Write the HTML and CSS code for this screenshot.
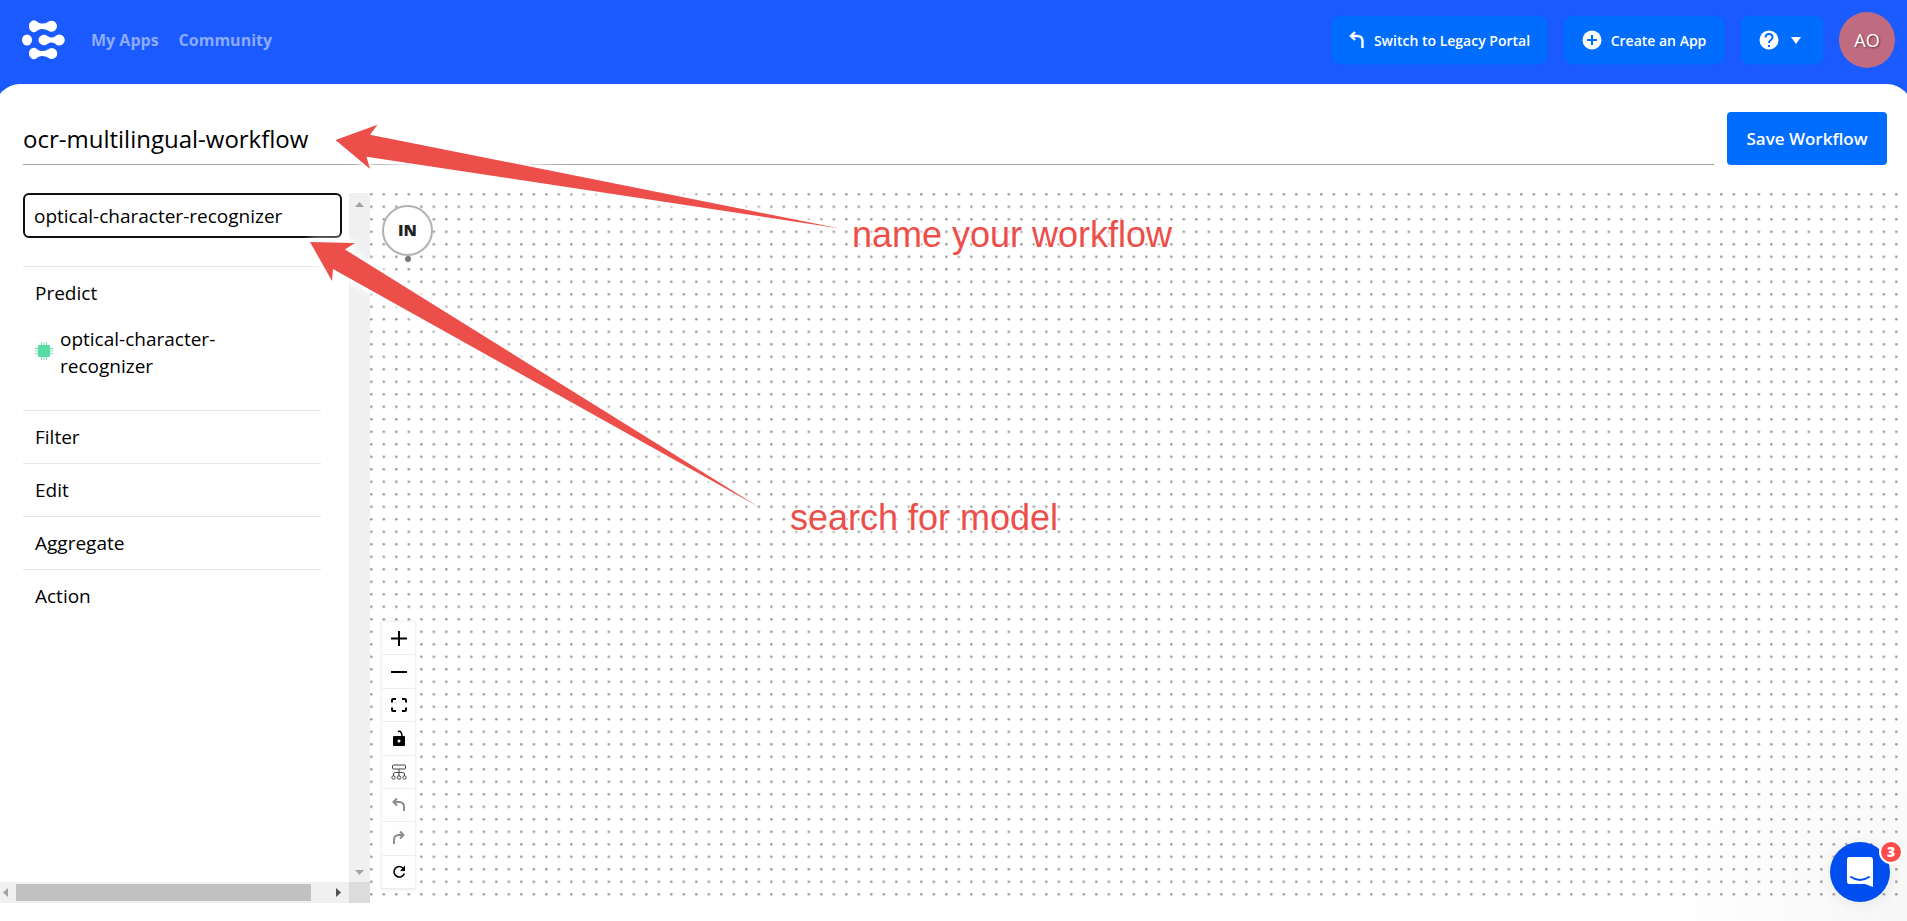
FILE: index.html
```html
<!DOCTYPE html>
<html lang="en">
<head>
<meta charset="utf-8">
<title>Workflow editor</title>
<link rel="stylesheet" href="styles.css">
</head>
<body>
<div class="page">
  <header class="topbar">
    <a class="logo" href="#" aria-label="Home">
      <svg width="44" height="40" viewBox="0 0 44 40" fill="#fff">
        <path d="M7 6.500a5 5.500 0 0 1 8.500-4.500c3 2 7 2 10.500 0a5.500 5.500 0 1 1 0 8.500c-3.500-2-7.500-2-10.500 0A5 5.500 0 0 1 7 6.500z"/>
        <ellipse cx="5" cy="20" rx="5" ry="5.500"/>
        <path d="M16.500 20a5.500 5.500 0 0 1 8.500-4.300c3 2.300 5.500 2.500 8.500.3a5.500 5.500 0 1 1 0 8c-3-2.200-5.500-2-8.500.3a5.500 5.500 0 0 1-8.500-4.300z"/>
        <path d="M7 33.500a5 5.500 0 0 1 8.500-4c3 2 7 2 10.500 0a5.500 5.500 0 1 1 0 8c-3.500-2-7.500-2-10.500 0A5 5.500 0 0 1 7 33.500z"/>
      </svg>
    </a>
    <nav class="nav">
      <a href="#">My Apps</a>
      <a href="#">Community</a>
    </nav>
    <div class="actions">
      <button class="action switch" type="button">
        <svg width="16" height="18" viewBox="0 0 16 18" fill="none" stroke="#fff" stroke-width="2.400"><path d="M6 1 2 5l4 4M2 5h6q5.500 0 5.500 5v7"/></svg>
        Switch to Legacy Portal
      </button>
      <button class="action create" type="button">
        <svg width="20" height="20" viewBox="0 0 20 20"><circle cx="10" cy="10" r="9.500" fill="#fff"/><path d="M10 5v10M5 10h10" stroke="#006dff" stroke-width="2"/></svg>
        Create an App
      </button>
      <button class="action help" type="button" aria-label="Help">
        <svg width="20" height="20" viewBox="0 0 20 20"><circle cx="10" cy="10" r="9.500" fill="#fff"/><path d="M6.500 7.500q0-3.500 3.500-3.500t3.500 3.300q0 1.700-1.700 2.700T10 13" fill="none" stroke="#006dff" stroke-width="2"/><path d="M9 15h2v2H9z" fill="#006dff"/></svg>
        <svg width="10" height="7" viewBox="0 0 10 7"><path d="M0 0h10L5 7z" fill="#fff"/></svg>
      </button>
      <button class="avatar" type="button">AO</button>
    </div>
  </header>

  <main class="sheet">
    <div class="titlebar">
      <input class="title" type="text" aria-label="Workflow name" value="ocr-multilingual-workflow">
      <button class="save" type="button">Save Workflow</button>
    </div>
    <div class="editor">
      <aside class="side">
        <div class="palette">
          <input class="search" type="text" aria-label="Search models" value="optical-character-recognizer">
          <section class="group">
            <h2>Predict</h2>
            <a class="model" href="#">
              <svg width="18" height="18" viewBox="0 0 18 18"><rect x="3" y="3" width="12" height="12" rx="1" fill="#57dca5"/><path d="M6.500 0v18M9 0v18M11.500 0v18M0 6.500h18M0 9h18M0 11.500h18" stroke="#57dca5" stroke-opacity=".8"/></svg>
              <span>optical-character-recognizer</span>
            </a>
          </section>
          <section class="group"><h2>Filter</h2></section>
          <section class="group"><h2>Edit</h2></section>
          <section class="group"><h2>Aggregate</h2></section>
          <section class="group"><h2>Action</h2></section>
        </div>
        <div class="vscroll">
          <svg width="9" height="5" viewBox="0 0 9 5"><path d="M0 5h9L4.500 0z" fill="#a3a3a3"/></svg>
          <svg width="9" height="5" viewBox="0 0 9 5"><path d="M0 0h9L4.500 5z" fill="#a3a3a3"/></svg>
        </div>
        <div class="hscroll">
          <svg width="5" height="9" viewBox="0 0 5 9"><path d="M5 0v9L0 4.500z" fill="#a3a3a3"/></svg>
          <span class="thumb"></span>
          <svg width="5" height="9" viewBox="0 0 5 9"><path d="M0 0v9l5-4.500z" fill="#505050"/></svg>
        </div>
        <div class="corner"></div>
      </aside>
      <div class="canvas">
        <svg class="dots" aria-hidden="true">
          <defs><pattern id="grid" width="12.500" height="12.500" patternUnits="userSpaceOnUse"><circle cx="1.300" cy="1.300" r="1.300" fill="#9c9ca0"/></pattern></defs>
          <rect width="100%" height="100%" fill="url(#grid)"/>
        </svg>
        <div class="node">IN</div>
        <div class="tools">
          <button type="button" aria-label="Zoom in"><svg width="16" height="16" viewBox="0 0 16 16"><path d="M8 1v15M0 8.500h16" stroke="#000" stroke-width="2"/></svg></button>
          <button type="button" aria-label="Zoom out"><svg width="16" height="16" viewBox="0 0 16 16"><path d="M0 8h16" stroke="#000" stroke-width="2"/></svg></button>
          <button type="button" aria-label="Fit view"><svg width="16" height="16" viewBox="0 0 16 16"><path d="M1 5.500V3q0-1 1-1h3M11 2h3q1 0 1 1v2.500M15 10.500V13q0 1-1 1h-3M5 14H2q-1 0-1-1v-2.500" fill="none" stroke="#000" stroke-width="2"/></svg></button>
          <button type="button" aria-label="Lock"><svg width="16" height="16" viewBox="0 0 16 16"><rect x="2" y="6" width="12" height="10" rx="1"/><circle cx="8" cy="11" r="1.500" fill="#fff"/><path d="M7 1.500q4-1 4 5" fill="none" stroke="#000" stroke-width="1.500"/></svg></button>
          <button type="button" aria-label="Auto layout"><svg width="16" height="16" viewBox="0 0 16 16" fill="none" stroke="#444"><rect x="1.500" y="1" width="13" height="4" rx="1"/><path d="M8 5v7M2.500 12V10q0-1.500 2-1.500h7q2 0 2 1.500v2"/><circle cx="2.500" cy="13.500" r="1.700"/><circle cx="8" cy="13.500" r="1.700"/><circle cx="13.500" cy="13.500" r="1.700"/></svg></button>
          <button type="button" aria-label="Undo"><svg width="16" height="16" viewBox="0 0 16 16" fill="none" stroke="#8c8c8c" stroke-width="2"><path d="M6 1.500 2.500 5 6 8.500M2.500 5H8q5 0 5 5v4"/></svg></button>
          <button type="button" aria-label="Redo"><svg width="16" height="16" viewBox="0 0 16 16" fill="none" stroke="#8c8c8c" stroke-width="2"><path d="m9 1.500 3.500 3.500L9 8.500M12.500 5H8Q3 5 3 10v4"/></svg></button>
          <button type="button" aria-label="Reset"><svg width="16" height="16" viewBox="0 0 16 16"><path d="M12.500 4.500A5.300 5.300 0 1 0 13.300 9.500" fill="none" stroke="#000" stroke-width="1.600"/><path d="M14 1.500V7H9z"/></svg></button>
        </div>
      </div>
    </div>
  </main>

  <svg class="arrows" aria-hidden="true" fill="#ec4e4a">
    <path d="M335.500 140 377.500 124.700 370 134.700 840 228.500 366.500 156.700 370 169z"/>
    <path d="M310 242 355 243 345 249.500 758 506.500 333 269 332 281z"/>
  </svg>
  <p class="note note-name">name your workflow</p>
  <p class="note note-search">search for model</p>

  <div class="haze"></div>
  <button class="chat" type="button" aria-label="Open chat">
    <svg width="28" height="32" viewBox="0 0 28 32"><path d="M3 1h21q3 0 3 3v27l-8-3H3q-2 0-2-3V4q0-3 2-3z" fill="#fff"/><path d="M5 21q9 6 18 0" fill="none" stroke="#004ef0" stroke-width="2" stroke-linecap="round"/></svg>
    <span class="badge">3</span>
  </button>
</div>
</body>
</html>
```
FILE: styles.css
```css
* { box-sizing: border-box; }

body {
  margin: 0;
  font-family: "Open Sans", "Noto Sans", sans-serif;
  font-size: 19px;
  line-height: 27px;
  color: #000;
  background: #fff;
}

button, input { font: inherit; color: inherit; margin: 0; }
button { border: 0; cursor: pointer; }
h2, p { margin: 0; font-weight: 400; font-size: inherit; }
a { color: inherit; text-decoration: none; }

.page {
  position: relative;
  display: flex;
  flex-direction: column;
  min-height: 100vh;
  overflow: hidden;
  background: #1a5aff;
}

.topbar {
  display: flex;
  align-items: center;
  height: 84px;
  padding: 0 12px 4px 22px;
}

.logo { display: flex; }
.nav {
  display: flex;
  gap: 20px;
  margin-left: 25px;
  font-size: 16px;
  font-weight: 700;
  color: #8cabff;
}

.actions {
  display: flex;
  align-items: center;
  gap: 17px;
  margin-left: auto;
}

.action {
  display: flex;
  align-items: center;
  justify-content: center;
  gap: 9px;
  height: 48px;
  padding: 0;
  border-radius: 8px;
  background: #006dff;
  box-shadow: 0 1px 3px rgba(0, 109, 255, .4);
  color: #fff;
  font-size: 14px;
  font-weight: 600;
  white-space: nowrap;
}
.switch { width: 215px; }
.create { width: 160px; }
.help { width: 82px; gap: 12px; padding-right: 4px; }

.avatar {
  width: 56px;
  height: 56px;
  margin-left: -1px;
  padding: 0;
  border-radius: 50%;
  background: #c16b80;
  color: #fff;
  font-size: 18px;
  text-shadow: 1px 1px 2px rgba(0, 0, 0, .5);
}

.sheet {
  flex: 1;
  display: flex;
  flex-direction: column;
  margin: 0 -5px;
  padding: 28px 5px 18px;
  border-radius: 25px 25px 0 0;
  background: #fff;
}

.titlebar {
  display: flex;
  gap: 13px;
  padding: 0 20px 0 23px;
}
.title {
  flex: 1;
  min-width: 0;
  height: 53px;
  padding: 0;
  border: 0;
  border-bottom: 1px solid #a3a3a3;
  outline: 0;
  background: none;
  font-size: 24px;
}
.save {
  width: 160px;
  height: 53px;
  padding: 0;
  border-radius: 4px;
  background: #006dff;
  color: #fff;
  font-size: 17px;
  font-weight: 600;
}

.editor {
  flex: 1;
  display: flex;
  margin-top: 28px;
}

.side {
  display: grid;
  grid-template: 1fr 21px / 1fr 21px;
  width: 370px;
}
.palette { padding: 0 7px 0 23px; }
.search {
  display: block;
  width: 100%;
  height: 45px;
  margin-bottom: 28px;
  padding: 1px 9px 0;
  border: 2px solid #101010;
  border-radius: 6px;
  outline: 0;
}
.group {
  margin-right: 21px;
  padding: 13px 12px 12px;
  border-top: 1px solid #e6e6e6;
}
.model {
  display: flex;
  align-items: center;
  gap: 7px;
  width: 190px;
  padding: 19px 0 18px;
}
.model svg { flex: none; margin-bottom: 4px; }

.vscroll {
  display: flex;
  flex-direction: column;
  align-items: center;
  justify-content: space-between;
  padding: 9px 0 7px;
  background: #f0f0f0;
}
.hscroll {
  display: flex;
  align-items: center;
  gap: 8px;
  padding: 0 8px 0 3px;
  background: #f0f0f0;
}
.thumb {
  flex: 1;
  height: 17px;
  margin-right: 17px;
  background: #c1c1c1;
}
.corner { background: #dcdcdc; }

.canvas {
  position: relative;
  flex: 1;
}
.dots {
  position: absolute;
  inset: 0;
  width: 100%;
  height: 100%;
}
.node {
  position: absolute;
  left: 12px;
  top: 12px;
  display: flex;
  align-items: center;
  justify-content: center;
  width: 51px;
  height: 51px;
  border: 2px solid #b1b1b7;
  border-radius: 50%;
  background: #fff;
  color: #222;
  font-size: 16px;
  font-weight: 800;
}
.node::after {
  content: "";
  position: absolute;
  top: 49px;
  width: 6px;
  height: 6px;
  border-radius: 50%;
  background: #777;
}
.tools {
  position: absolute;
  left: 12px;
  bottom: 14px;
  display: flex;
  flex-direction: column;
  width: 33px;
  height: 267px;
  box-shadow: 0 0 2px 1px rgba(0, 0, 0, .08);
}
.tools button {
  flex: 1;
  display: flex;
  align-items: center;
  justify-content: center;
  padding: 0;
  border-bottom: 1px solid #eee;
  background: #fefefe;
}

.arrows {
  position: absolute;
  inset: 0;
  width: 100%;
  height: 100%;
  pointer-events: none;
  filter: drop-shadow(0 0 2px #fff) drop-shadow(0 0 3px #fff) drop-shadow(0 0 3px #fff);
}
.note {
  position: absolute;
  font-family: "Liberation Sans", Arial, sans-serif;
  font-size: 36px;
  line-height: 42px;
  color: #ec4e4a;
  text-shadow: 0 0 3px #fff, 0 0 3px #fff, 0 0 4px #fff;
  white-space: nowrap;
}
.note-name { left: 852px; top: 214px; }
.note-search { left: 790px; top: 497px; }

.haze {
  position: absolute;
  right: 0;
  bottom: 0;
  width: 250px;
  height: 250px;
  background: radial-gradient(circle at 100% 100%, rgba(29, 39, 54, .04), rgba(29, 39, 54, 0) 70%);
  pointer-events: none;
}
.chat {
  position: absolute;
  right: 17px;
  bottom: 19px;
  display: flex;
  align-items: center;
  justify-content: center;
  width: 60px;
  height: 60px;
  padding: 0;
  border-radius: 50%;
  background: #004ef0;
  box-shadow: 0 2px 16px rgba(0, 0, 0, .08);
}
.badge {
  position: absolute;
  right: -13px;
  top: -2px;
  width: 24px;
  height: 24px;
  border: 2px solid #fff;
  border-radius: 50%;
  background: #ff4b4b;
  color: #fff;
  font-size: 14px;
  font-weight: 800;
  line-height: 20px;
}
```
